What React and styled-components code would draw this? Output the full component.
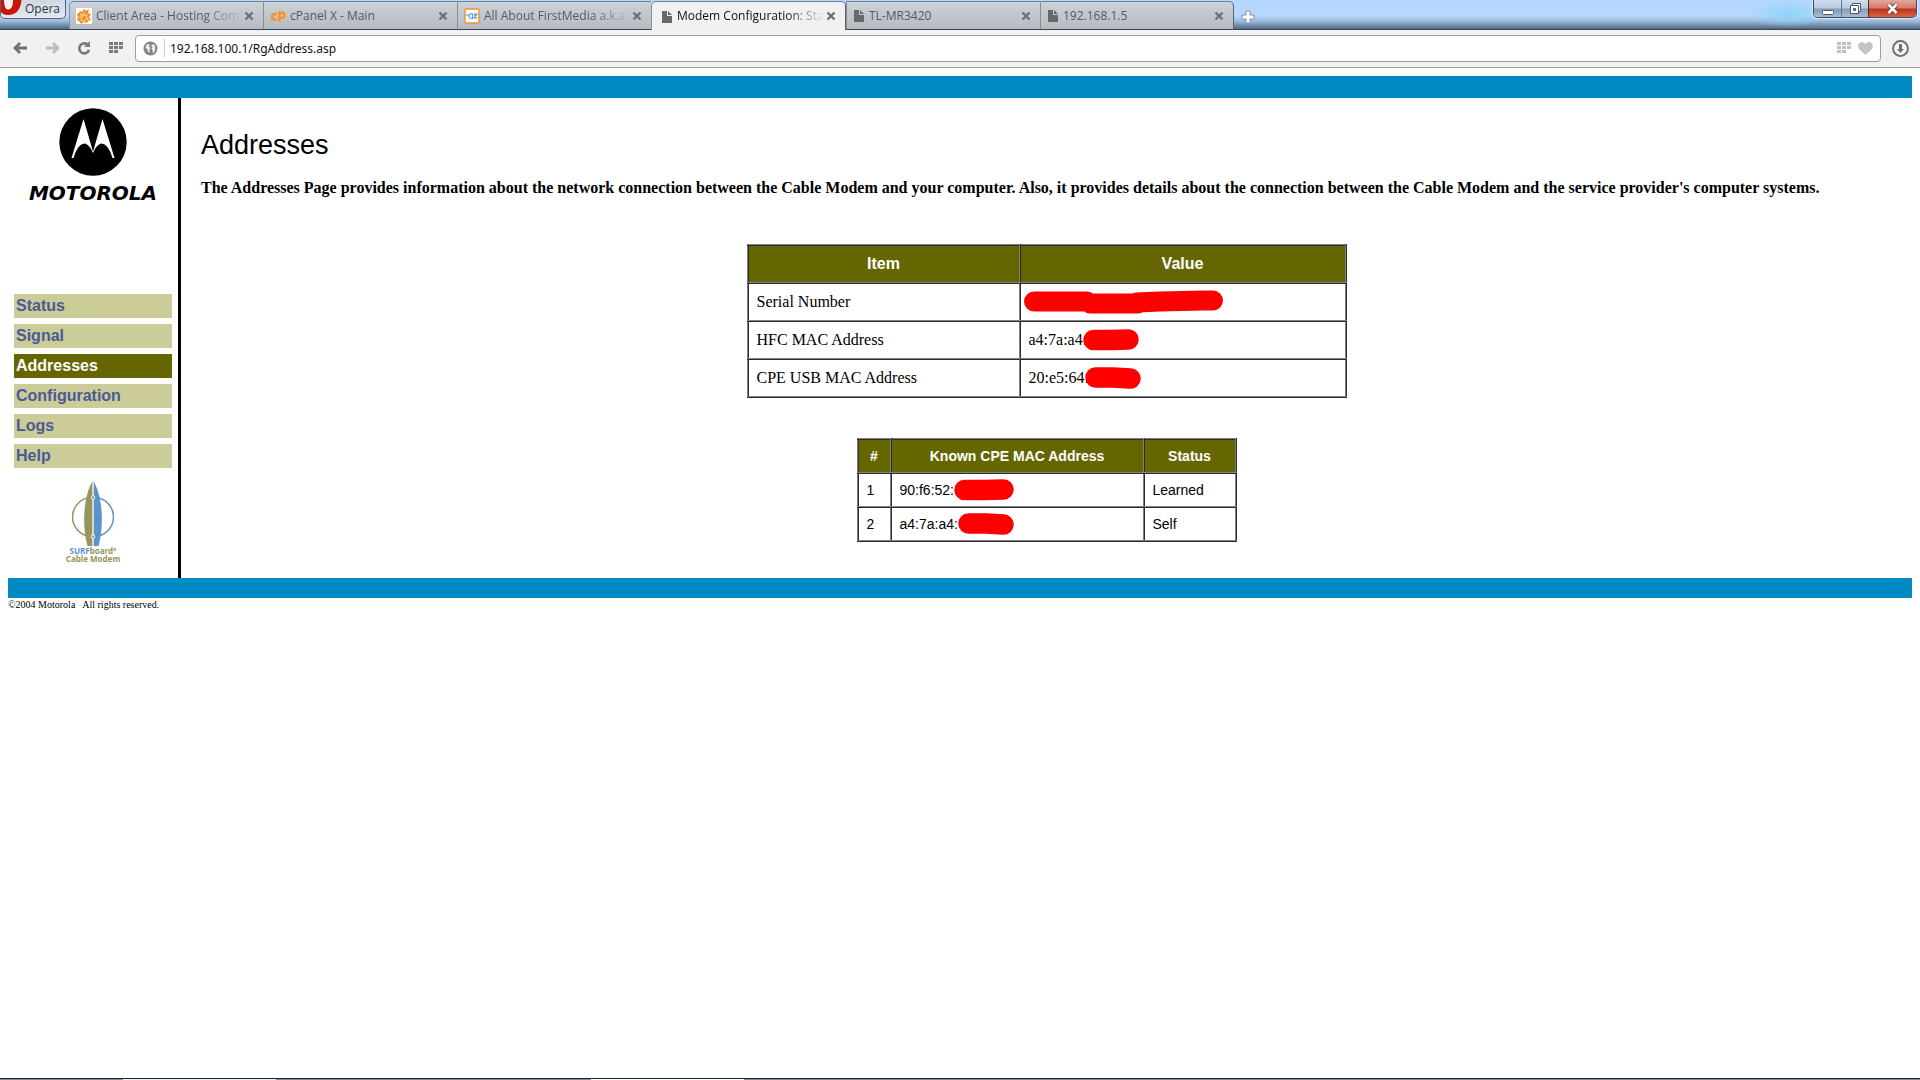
import React, { Component } from 'react';
import styled, { createGlobalStyle, css } from 'styled-components';

const GlobalStyle = createGlobalStyle`
* {
box-sizing: border-box;
}
body {
margin: 0;
background-color: #ffffff;
color: #000000;
font-family: 'Liberation Serif', serif;
font-size: 16px;
}
button {
border: 0;
padding: 0;
background: none;
font: inherit;
}
svg {
display: block;
flex: none;
}
`
const Browser = styled.div`
display: flex;
flex-direction: column;
min-height: 100vh;
`

// browser chrome

const TitleBar = styled.header`
display: flex;
align-items: flex-start;
height: 30px;
border-bottom: 1px solid #34465a;
background:
  radial-gradient(ellipse 40px 14px at calc(100% - 132px) 14px, #8fd2f8, transparent),
  linear-gradient(to bottom, #b5d7fd 0, #b7d9ff 16px, #9dbbdb 21px, #4f6883 29px);
font-family: 'Open Sans', sans-serif;
font-size: 12px;
`
const OperaButton = styled.button`
display: flex;
align-items: flex-start;
width: 66px;
height: 19px;
border: 1px solid #59636f;
border-top: 0;
border-radius: 0 0 5px 5px;
background: linear-gradient(#ced8e4, #e3e9f2);
color: #333333;
line-height: 18px;
gap: 3px;
`
const Tabs = styled.nav`
display: flex;
align-items: flex-start;
padding: 1px 0 0 3px;
`
const Tab = styled.div`
display: flex;
align-items: center;
width: 194px;
height: 28px;
padding: 0 8px 0 6px;
border-top: 1px solid #6f8196;
border-left: 1px solid #888e95;
background: linear-gradient(#cdd2da, #b6bbc0);
color: #555a60;
&:first-child {
border-radius: 5px 0 0 0;
}
&:last-child {
border-radius: 0 5px 0 0;
border-right: 1px solid #59636f;
}
${props => props.$active && css`
height: 29px;
width: 195px;
padding-left: 9px;
border-radius: 5px 5px 0 0;
border-right: 1px solid #59636f;
background: #f1f1f1;
color: #111111;
margin-bottom: -1px;
`}
`
const TabTitle = styled.span`
flex: 1;
min-width: 0;
padding-left: 4px;
white-space: nowrap;
line-height: 26px;
${props => props.$fade && css`
mask-image: linear-gradient(to right, #000 calc(100% - 40px), transparent);
`}
`
const CloseTab = styled.button`
display: flex;
align-items: center;
justify-content: center;
width: 12px;
height: 16px;
`
const NewTab = styled.button`
display: flex;
padding: 10px 7px;
`
const WindowButtons = styled.div`
display: flex;
margin-left: auto;
margin-right: 3px;
height: 18px;
border: 1px solid #3f4d5e;
border-top: 0;
border-radius: 0 0 5px 5px;
overflow: hidden;
box-shadow: 0 0 1px 1px #dcebfa;
`
const WindowButton = styled.button`
display: flex;
align-items: center;
justify-content: center;
width: ${props => props.$close ? '48px' : '27px'};
border-left: 1px solid ${props => props.$close ? '#5d2420' : '#64778c'};
background: ${props => props.$close
  ? 'linear-gradient(#e5a69c 0, #d37a6d 8px, #bd3420 9px, #d8643f 17px)'
  : 'linear-gradient(#cfdff0 0, #b9cbe0 8px, #869cb4 9px, #a5bed6 17px)'};
&:first-child {
border-left: 0;
}
`
const Toolbar = styled.form`
display: flex;
align-items: center;
height: 38px;
padding: 0 11px 1px 12px;
border-bottom: 1px solid #a2a2a2;
background-color: #f1f1f1;
`
const ToolButton = styled.button`
display: flex;
align-items: center;
justify-content: center;
width: 16px;
height: 24px;
margin-right: 16px;
`
const AddressBox = styled.div`
display: flex;
flex: 1;
align-items: center;
height: 27px;
margin-left: -5px;
margin-right: 11px;
padding: 0 7px;
border: 1px solid #9b9b9b;
border-radius: 4px;
background-color: #ffffff;
gap: 6px;
`
const AddressInput = styled.input`
flex: 1;
height: 18px;
padding: 0 0 0 5px;
border: 0;
border-left: 1px solid #cccccc;
outline: 0;
background: transparent;
color: #111111;
font-family: 'Noto Sans', sans-serif;
font-size: 12px;
`
const DownloadButton = styled.button`
display: flex;
`

// modem page

const Page = styled.div`
padding: 8px 8px 0;
`
const Bar = styled.div`
height: ${props => props.$height};
background-color: #008ac2;
`
const Columns = styled.div`
display: flex;
min-height: 480px;
`
const Sidebar = styled.aside`
display: flex;
flex-direction: column;
align-items: center;
width: 173px;
flex: none;
padding-top: 10px;
border-right: 3px solid #000000;
`
const Brand = styled.div`
display: flex;
flex-direction: column;
align-items: center;
height: 186px;
gap: 7px;
`
const BrandName = styled.div`
font-family: 'DejaVu Sans', sans-serif;
font-size: 20px;
font-weight: bold;
font-style: italic;
line-height: 20px;
`
const Menu = styled.nav`
display: flex;
flex-direction: column;
align-self: stretch;
gap: 6px;
padding: 0 6px;
`
const MenuLink = styled.a`
height: 24px;
padding-left: 2px;
background-color: ${props => props.$active ? '#666600' : '#cccc99'};
color: ${props => props.$active ? '#ffffff' : '#4a5a94'};
font-family: 'Liberation Sans', sans-serif;
font-size: 16px;
font-weight: bold;
line-height: 24px;
text-decoration: none;
`
const Surfboard = styled.div`
display: flex;
flex-direction: column;
align-items: center;
padding-top: 13px;
color: #98945c;
font-family: 'Noto Sans', sans-serif;
font-size: 8px;
font-weight: bold;
line-height: 8px;
`
const Blue = styled.span`
color: #5b93cc;
`
const Content = styled.main`
display: flex;
flex: 1;
flex-direction: column;
align-items: center;
min-width: 0;
padding: 31px 20px 36px;
`
const Title = styled.h1`
align-self: stretch;
margin: 0;
font-family: 'Liberation Sans', sans-serif;
font-size: 27px;
font-weight: normal;
line-height: 32px;
`
const Description = styled.p`
align-self: stretch;
margin: 18px 0 47px;
font-weight: bold;
line-height: 18px;
`
const DataTable = styled.table`
width: ${props => props.$width};
margin-bottom: 40px;
border-collapse: collapse;
table-layout: fixed;
font-family: ${props => props.$sans ? "'Liberation Sans', sans-serif" : 'inherit'};
font-size: ${props => props.$sans ? '14px' : '16px'};
line-height: 18px;
&:last-child {
margin-bottom: 0;
}
th, td {
height: ${props => props.$sans ? '34px' : '38px'};
padding: 0 8px;
border: 2px ridge #808080;
text-align: left;
}
th {
background-color: #666600;
color: #ffffff;
font-family: 'Liberation Sans', sans-serif;
text-align: center;
}
`
const Column = styled.col`
width: ${props => props.$width};
`
const Masked = styled.div`
display: flex;
align-items: center;
height: 18px;
svg {
margin: -4px 0 -4px ${props => props.$overlap};
}
`
const Copyright = styled.footer`
padding-bottom: 8px;
font-size: 10px;
line-height: 14px;
white-space: pre;
`
const Taskbar = styled.div`
height: 2px;
margin-top: auto;
border-top: 1px solid #1c2430;
background: linear-gradient(to right, #8a8c99 123px, #eeeeee 123px, #eeeeee 276px, #8a8c99 276px, #8a8c99 591px, #ffffff 591px, #ffffff 744px, #8a8c99 744px);
`

const HostIcon = () => (
  <svg width="16" height="16" viewBox="0 0 16 16">
    <rect width="16" height="16" fill="#fff" />
    <path d="M8 1l2 2 3-2-1 4 3 1-2 3 2 3-3 1-1 2-3-1-3 2-2-3-2-1 1-3-1-3 2-1 1-2 2 1z" fill="#f58a1f" />
    <path d="M3 10q2-4 5-3t3 3-3 3-3-2 2-2M4 6l3 1M8 4v3M12 6l-2 2M13 11h-2" fill="none" stroke="#ffe1b5" />
  </svg>
)

const CPanelIcon = () => (
  <svg width="16" height="16" viewBox="0 0 16 16" fill="none" stroke="#f7931e" strokeWidth="2.4">
    <path d="M7 6H5Q2 6 2 8.700T5 11.500h1.500" />
    <path d="M9.500 13.500V4.500h2.300q2.700 0 2.700 2.700t-2.700 2.700H10" />
  </svg>
)

const MediaIcon = () => (
  <svg width="16" height="16" viewBox="0 0 16 16">
    <rect x="1" y="1" width="14" height="14" rx="1" fill="#fff" stroke="#f59331" strokeWidth="1.500" />
    <path d="M2 7h3M8.500 6Q5 5 5 8t3.500 2M8.500 5.500V11M10 6h3l-3 4h3M10 6l3 4" fill="none" stroke="#4e9bc9" strokeWidth="1.100" />
  </svg>
)

const PageIcon = () => (
  <svg width="12" height="13" viewBox="0 0 12 13">
    <path d="M1 1h5v5h5v7H1z" fill="#686868" />
    <path d="M7 1l4 4H7z" fill="#686868" />
  </svg>
)

const CrossIcon = () => (
  <svg width="10" height="10" viewBox="0 0 10 10">
    <path d="M1.500 1.500l7 7M8.500 1.500l-7 7" stroke="#6c7075" strokeWidth="2.400" />
  </svg>
)

const ArrowIcon = ({ flip, color }) => (
  <svg width="15" height="12" viewBox="0 0 15 12">
    <path
      d="M7 1L2 6l5 5M2 6h12"
      fill="none"
      stroke={color}
      strokeWidth="2.800"
      transform={flip ? 'rotate(180 7.5 6)' : undefined}
    />
  </svg>
)

const ReloadIcon = () => (
  <svg width="14" height="14" viewBox="0 0 14 14">
    <path d="M10.500 3.500A5 5 0 1 0 12 9" fill="none" stroke="#77797c" strokeWidth="2.600" />
    <path d="M13 0v6H7z" fill="#77797c" />
  </svg>
)

const GridIcon = ({ color }) => (
  <svg width="15" height="12" viewBox="0 0 15 12" fill={color}>
    <path d="M0 0h4v3H0zM5 0h4v3H5zM10 0h4v3h-4zM0 4h4v3H0zM5 4h4v3H5zM10 4h4v3h-4zM0 8h4v3H0zM5 8h4v3H5z" />
  </svg>
)

const GlobeIcon = () => (
  <svg width="15" height="15" viewBox="0 0 15 15">
    <circle cx="7.500" cy="7.500" r="7" fill="#858585" />
    <path d="M2.500 5.500L4.500 3l2 .5-.5 2 1.500 1.500-1 1.500v3l-1.500-.5-.5-2.500L3 7z" fill="#efefef" />
    <path d="M8 4.500L10.500 3l2 2.500-1 1.500 1 1-1.500 3.500-1 1-.5-3.500L8.500 8 9.500 6z" fill="#efefef" />
  </svg>
)

const HeartIcon = () => (
  <svg width="15" height="13" viewBox="0 0 15 13">
    <path d="M7.500 13L1.500 7.500Q-1 4 1 1.500Q4-1.500 7.500 2Q11-1.500 14 1.500Q16 4 13.500 7.500z" fill="#c4c4c4" />
  </svg>
)

const DownloadIcon = () => (
  <svg width="17" height="17" viewBox="0 0 17 17">
    <circle cx="8.500" cy="8.500" r="7.400" fill="#f7f7f7" stroke="#6d6f72" strokeWidth="2" />
    <path d="M7 4h3v5h2l-3.500 4L5 9h2z" fill="#6d6f72" />
  </svg>
)

const OperaIcon = () => (
  <svg width="21" height="15" viewBox="0 0 21 15">
    <path d="M0 0h20.500Q19 15 7 15 2 15 0 12z" fill="#c91408" />
    <path d="M3 0h9q0 9-4.500 9.500T3 0z" fill="#f3f3f6" />
  </svg>
)

const MotorolaIcon = () => (
  <svg width="68" height="68" viewBox="0 0 68 68">
    <circle cx="34" cy="34" r="33.700" fill="#000" />
    <path d="M24.500 11L34 43.500 43.500 11 55.500 50h-2Q49 35 42 35.500 37 37 34 45 31 37 26 35.500 19 35 14.500 50h-2z" fill="#fff" />
  </svg>
)

const SurfIcon = () => (
  <svg width="42" height="66" viewBox="0 0 42 66">
    <path d="M20.500 0C11 16 10 46 15.500 65h5z" fill="#98945c" />
    <path d="M21.500 0C31 16 32 46 26.500 65h-5z" fill="#5b93cc" />
    <path d="M21 1v64" stroke="#e9e9dc" />
    <path d="M20 16.500A19.500 19.500 0 0 0 20 55.500" fill="none" stroke="#98945c" strokeWidth="1.500" />
    <path d="M22 16.500A19.500 19.500 0 0 1 22 55.500" fill="none" stroke="#5b93cc" strokeWidth="1.500" />
    <circle cx="21" cy="16.500" r="1.800" fill="#5b93cc" stroke="#fff" />
    <circle cx="21" cy="55.500" r="1.800" fill="#98945c" stroke="#fff" />
  </svg>
)

const LongScribble = () => (
  <svg width="200" height="24" viewBox="0 0 200 24">
    <path d="M10 11.500h53M66 13.500h48M112 12.500l24-1 44-1h9" fill="none" stroke="#f00" strokeWidth="20" strokeLinecap="round" strokeLinejoin="round" />
  </svg>
)

const Scribble = ({ width, dip }) => (
  <svg width={width} height="22" viewBox={`0 0 ${width} 22`}>
    <path
      d={`M10.500 ${dip ? 10.500 : 11}H${width / 2}L${width - 10.500} ${dip ? 11.500 : 10.500}`}
      fill="none"
      stroke="#f00"
      strokeWidth="20.500"
      strokeLinecap="round"
    />
  </svg>
)

const tabs = [
  { title: 'Client Area - Hosting Com', icon: <HostIcon />, fade: true },
  { title: 'cPanel X - Main', icon: <CPanelIcon /> },
  { title: 'All About FirstMedia a.k.a', icon: <MediaIcon />, fade: true },
  { title: 'Modem Configuration: Sta', icon: <PageIcon />, fade: true, active: true },
  { title: 'TL-MR3420', icon: <PageIcon /> },
  { title: '192.168.1.5', icon: <PageIcon /> },
]

const menu = ['Status', 'Signal', 'Addresses', 'Configuration', 'Logs', 'Help']

class App extends Component {
  render() {
    return (
      <Browser>
        <GlobalStyle />
        <TitleBar>
          <OperaButton><OperaIcon />Opera</OperaButton>
          <Tabs>
            {tabs.map(tab => (
              <Tab key={tab.title} $active={tab.active}>
                {tab.icon}
                <TabTitle $fade={tab.fade}>{tab.title}</TabTitle>
                <CloseTab aria-label="Close tab"><CrossIcon /></CloseTab>
              </Tab>
            ))}
          </Tabs>
          <NewTab aria-label="New tab">
            <svg width="14" height="14" viewBox="0 0 14 14">
              <path d="M5 1h4v4h4v4H9v4H5V9H1V5h4z" fill="#fff" stroke="#7f94ab" />
            </svg>
          </NewTab>
          <WindowButtons>
            <WindowButton aria-label="Minimize">
              <svg width="12" height="14" viewBox="0 0 12 14">
                <rect x="0.500" y="8.500" width="11" height="4" rx="1" fill="#fff" stroke="#4d5866" />
              </svg>
            </WindowButton>
            <WindowButton aria-label="Restore">
              <svg width="13" height="13" viewBox="0 0 13 13" fill="#fff" stroke="#4d5866">
                <path d="M3.500 1.500h8v8h-8z" />
                <path d="M1.500 3.500h8v8h-8z" />
                <path d="M4.500 6.500h2v2h-2z" fill="#8497ad" />
              </svg>
            </WindowButton>
            <WindowButton $close aria-label="Close">
              <svg width="13" height="12" viewBox="0 0 13 12">
                <path d="M2.500 1.500l8 8.500M10.500 1.500l-8 8.500" stroke="#5a3a3c" strokeWidth="4.500" />
                <path d="M2.500 1.500l8 8.500M10.500 1.500l-8 8.500" stroke="#fff" strokeWidth="2.600" />
              </svg>
            </WindowButton>
          </WindowButtons>
        </TitleBar>
        <Toolbar onSubmit={e => e.preventDefault()}>
          <ToolButton type="button" aria-label="Back"><ArrowIcon color="#6f7275" /></ToolButton>
          <ToolButton type="button" aria-label="Forward"><ArrowIcon color="#bdbdbd" flip /></ToolButton>
          <ToolButton type="button" aria-label="Reload"><ReloadIcon /></ToolButton>
          <ToolButton type="button" aria-label="Speed dial"><GridIcon color="#77797c" /></ToolButton>
          <AddressBox>
            <GlobeIcon />
            <AddressInput aria-label="Address" defaultValue="192.168.100.1/RgAddress.asp" />
            <GridIcon color="#bfbfbf" />
            <HeartIcon />
          </AddressBox>
          <DownloadButton type="button" aria-label="Downloads"><DownloadIcon /></DownloadButton>
        </Toolbar>

        <Page>
          <Bar $height="22px" />
          <Columns>
            <Sidebar>
              <Brand>
                <MotorolaIcon />
                <BrandName>MOTOROLA</BrandName>
              </Brand>
              <Menu>
                {menu.map(item => (
                  <MenuLink key={item} href="#" $active={item === 'Addresses'}>{item}</MenuLink>
                ))}
              </Menu>
              <Surfboard>
                <SurfIcon />
                <div><Blue>SURF</Blue>board°</div>
                <div>Cable Modem</div>
              </Surfboard>
            </Sidebar>
            <Content>
              <Title>Addresses</Title>
              <Description>
                The Addresses Page provides information about the network connection between the Cable Modem and your computer. Also, it provides details about the connection between the Cable Modem and the service provider's computer systems.
              </Description>
              <DataTable $width="600px">
                <colgroup>
                  <Column $width="272px" />
                  <Column />
                </colgroup>
                <thead>
                  <tr><th>Item</th><th>Value</th></tr>
                </thead>
                <tbody>
                  <tr>
                    <td>Serial Number</td>
                    <td><Masked $overlap="-5px"><LongScribble /></Masked></td>
                  </tr>
                  <tr>
                    <td>HFC MAC Address</td>
                    <td><Masked $overlap="-4px">a4:7a:a4:<Scribble width={56} /></Masked></td>
                  </tr>
                  <tr>
                    <td>CPE USB MAC Address</td>
                    <td><Masked $overlap="-4px">20:e5:64:<Scribble width={56} dip /></Masked></td>
                  </tr>
                </tbody>
              </DataTable>
              <DataTable $width="380px" $sans>
                <colgroup>
                  <Column $width="33px" />
                  <Column $width="253px" />
                  <Column />
                </colgroup>
                <thead>
                  <tr><th>#</th><th>Known CPE MAC Address</th><th>Status</th></tr>
                </thead>
                <tbody>
                  <tr>
                    <td>1</td>
                    <td><Masked $overlap="0">90:f6:52:<Scribble width={60} /></Masked></td>
                    <td>Learned</td>
                  </tr>
                  <tr>
                    <td>2</td>
                    <td><Masked $overlap="0">a4:7a:a4:<Scribble width={56} dip /></Masked></td>
                    <td>Self</td>
                  </tr>
                </tbody>
              </DataTable>
            </Content>
          </Columns>
          <Bar $height="20px" />
          <Copyright>©2004 Motorola   All rights reserved.</Copyright>
        </Page>
        <Taskbar />
      </Browser>
    )
  }
}

export default App;
